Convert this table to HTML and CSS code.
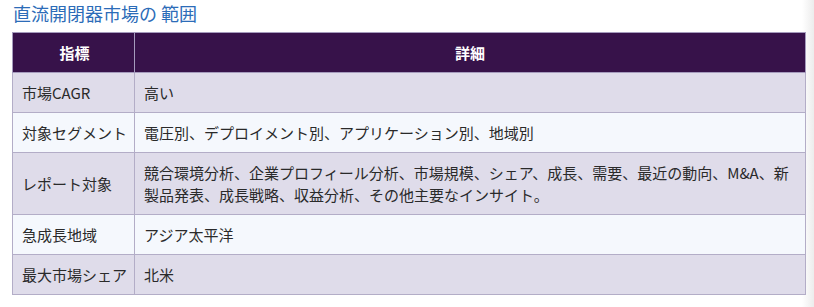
FILE: index.html
```html
<!DOCTYPE html>
<html lang="ja">
<head>
<meta charset="utf-8">
<title>直流開閉器市場の 範囲</title>
<link rel="stylesheet" href="styles.css">
</head>
<body>
<div class="page">
  <h2 class="title">直流開閉器市場の 範囲</h2>
  <table class="scope">
    <thead>
      <tr><th class="c1">指標</th><th>詳細</th></tr>
    </thead>
    <tbody>
      <tr class="odd"><td class="c1">市場CAGR</td><td>高い</td></tr>
      <tr class="even"><td class="c1">対象セグメント</td><td>電圧別、デプロイメント別、アプリケーション別、地域別</td></tr>
      <tr class="odd"><td class="c1">レポート対象</td><td>競合環境分析、企業プロフィール分析、市場規模、シェア、成長、需要、最近の動向、M&amp;A、新製品発表、成長戦略、収益分析、その他主要なインサイト。</td></tr>
      <tr class="even"><td class="c1">急成長地域</td><td>アジア太平洋</td></tr>
      <tr class="odd"><td class="c1">最大市場シェア</td><td>北米</td></tr>
    </tbody>
  </table>
</div>
</body>
</html>
```

FILE: styles.css
```css
html {
  background: linear-gradient(to right, #ffffff calc(100% - 12px), #ececec 100%);
}
body {
  margin: 0;
  font-family: "Noto Sans CJK JP", "Noto Sans", sans-serif;
  color: #2a2a2a;
}
.page {
  padding: 0 8px 0 12px;
}
.title {
  margin: 0 0 6px 1px;
  padding-top: 1px;
  font-size: 18px;
  line-height: 25px;
  font-weight: 400;
  color: #2c6cb8;
}
.scope {
  width: 794px;
  border-collapse: collapse;
  font-size: 15px;
  line-height: 22px;
}
.scope th,
.scope td {
  border: 1px solid #b3adc7;
  padding: 9px 9px 8px 9px;
  text-align: left;
  vertical-align: middle;
}
.scope th {
  background: #37124a;
  color: #fff;
  font-weight: 700;
  text-align: center;
  border-color: #a59bbd;
}
.scope .c1 {
  width: 105px;
  padding-right: 7px;
  white-space: nowrap;
}
.scope .odd td {
  background: #dfdcea;
}
.scope .even td {
  background: #f5f8fd;
}
```
